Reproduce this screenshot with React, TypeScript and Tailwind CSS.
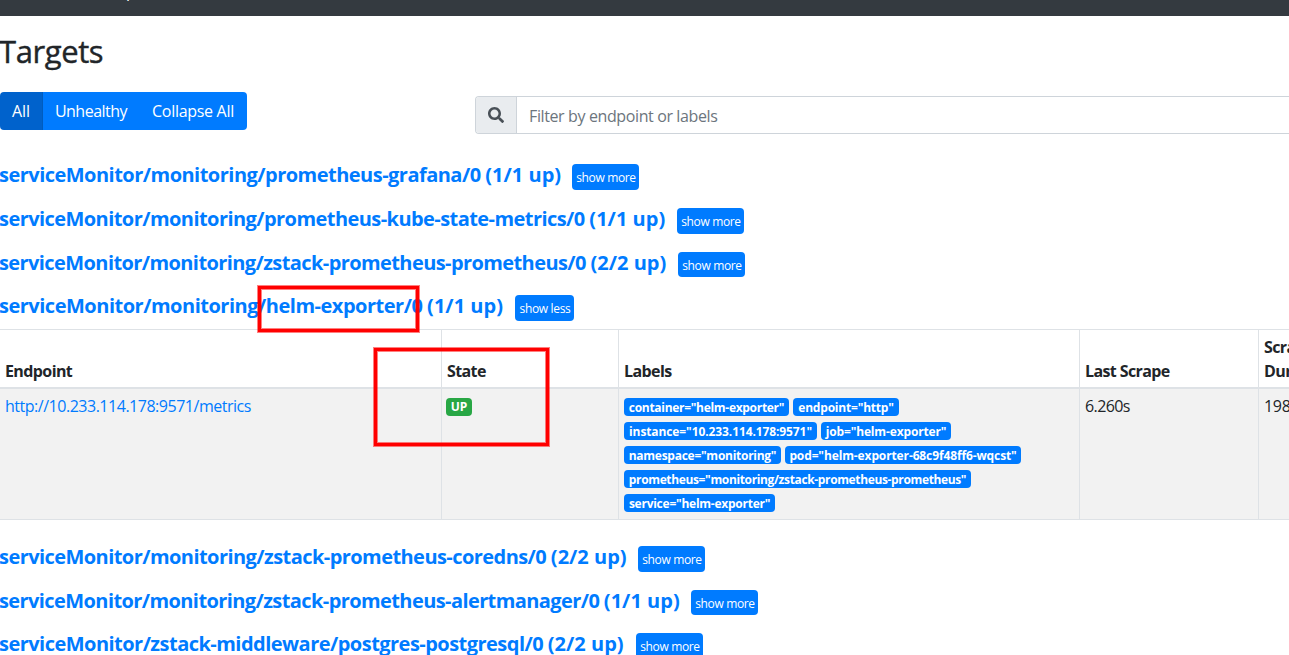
import { FaSearch } from "react-icons/fa";

type Pool = { name: string; count: string; box: string; open?: boolean };

const before: Pool[] = [
  { name: "serviceMonitor/monitoring/prometheus-grafana/0", count: "(1/1 up)", box: "w-[573px] tracking-[-0.52px]" },
  { name: "serviceMonitor/monitoring/prometheus-kube-state-metrics/0", count: "(1/1 up)", box: "w-[678px] tracking-[-0.56px]" },
  { name: "serviceMonitor/monitoring/zstack-prometheus-prometheus/0", count: "(2/2 up)", box: "w-[679px] tracking-[-0.59px]" },
  { name: "serviceMonitor/monitoring/helm-exporter/0", count: "(1/1 up)", box: "w-[516px] tracking-[-0.49px]", open: true },
];

const after: Pool[] = [
  { name: "serviceMonitor/monitoring/zstack-prometheus-coredns/0", count: "(2/2 up)", box: "w-[639px] tracking-[-0.56px]" },
  { name: "serviceMonitor/monitoring/zstack-prometheus-alertmanager/0", count: "(1/1 up)", box: "w-[692px] tracking-[-0.59px]" },
  { name: "serviceMonitor/zstack-middleware/postgres-postgresql/0", count: "(2/2 up)", box: "w-[637px] tracking-[-0.53px]" },
];

const labels = [
  [{ t: 'container="helm-exporter"', w: "w-[165px] tracking-[-0.3px]" }, { t: 'endpoint="http"', w: "w-[106px] tracking-[-0.2px]" }],
  [{ t: 'instance="10.233.114.178:9571"', w: "w-[193px] tracking-[-0.1px]" }, { t: 'job="helm-exporter"', w: "w-[130px] tracking-[-0.15px]" }],
  [{ t: 'namespace="monitoring"', w: "w-[157px] tracking-[-0.27px]" }, { t: 'pod="helm-exporter-68c9f48ff6-wqcst"', w: "w-[236px] tracking-[-0.12px]" }],
  [{ t: 'prometheus="monitoring/zstack-prometheus-prometheus"', w: "w-[347px] tracking-[-0.36px]" }],
  [{ t: 'service="helm-exporter"', w: "w-[151px] tracking-[-0.25px]" }],
];

function PoolRow({ pool }: { pool: Pool }) {
  return (
    <div className="-ml-px flex h-[43.85px] items-start whitespace-nowrap">
      <h3 className={`${pool.box} -mt-px shrink-0 text-[20px] leading-6 font-bold text-[#007bff]`}>
        {pool.name} <span className="tracking-[0.02px]">{pool.count}</span>
      </h3>
      <button
        className={`${pool.open ? "w-[59px]" : "w-[67px]"} h-[25.85px] shrink-0 rounded bg-[#007bff] pt-[2px] pl-px text-center text-[12px] tracking-[-0.35px] text-white`}
      >
        {pool.open ? "show less" : "show more"}
      </button>
    </div>
  );
}

export default function App() {
  return (
    <div className="relative h-[655px] w-full overflow-hidden bg-white font-['Open_Sans','Noto_Sans',sans-serif] text-[16px] leading-6 text-[#212529]">
      <nav className="h-4 overflow-hidden bg-[#343a40] pl-[99px] text-white">
        <div className="-mt-[21px] leading-6">Graph</div>
      </nav>
      <h2 className="mt-[16px] -ml-px h-[38px] text-[31px] leading-[38px] font-medium tracking-[-0.4px] [-webkit-text-stroke:0.4px_#212529]">Targets</h2>
      <div className="mt-[22px] flex h-[71.85px] items-start">
        <div className="flex h-[38px] w-[247px] overflow-hidden rounded-r text-white">
          <button className="w-[43px] rounded-l border-r border-[#005cbf] bg-[#0062cc]">All</button>
          <button className="w-[96px] bg-[#007bff] tracking-[-0.5px]">Unhealthy</button>
          <button className="w-[108px] bg-[#007bff] tracking-[-0.3px]">Collapse All</button>
        </div>
        <div className="mt-1 ml-[228px] flex h-[38px] flex-1 overflow-hidden rounded-l border border-r-0 border-[#ced4da]">
          <div className="flex w-[41px] items-center justify-center border-r border-[#ced4da] bg-[#e9ecef] text-[#495057]">
            <FaSearch size={16} />
          </div>
          <div className="flex items-center pt-[2px] pl-3 tracking-[-0.38px] text-[#6c757d]">Filter by endpoint or labels</div>
        </div>
      </div>

      <div className="h-[165.15px]">
        {before.map((p) => <PoolRow key={p.name} pool={p} />)}
      </div>

      <table className="h-[191px] w-[1400px] table-fixed border-separate border-spacing-0 border-t border-[#dee2e6] text-left">
        <colgroup>
          <col className="w-[441px]" /><col className="w-[177px]" /><col className="w-[461px]" /><col className="w-[179px]" /><col className="w-[142px]" />
        </colgroup>
        <thead>
          <tr className="h-[59px] align-bottom tracking-[-0.6px] [&>th]:border-b-2 [&>th]:border-l [&>th]:border-[#dee2e6] [&>th]:pb-1 [&>th]:pl-[5px] [&>th]:font-bold">
            <th className="border-l-0!">Endpoint</th>
            <th>State</th>
            <th>Labels</th>
            <th>Last Scrape</th>
            <th>Scrape<br />Duration</th>
          </tr>
        </thead>
        <tbody>
          <tr className="h-[131px] bg-[#f2f2f2] align-top [&>td]:border-b [&>td]:border-l [&>td]:border-[#dee2e6] [&>td]:pt-[5px] [&>td]:pl-[5px]">
            <td className="border-l-0! tracking-[-0.48px] text-[#007bff]">http://10.233.114.178:9571/metrics</td>
            <td>
              <span className="mt-1 -ml-px flex h-[18px] w-[26px] items-center justify-center rounded bg-[#28a745] pt-px text-[12px] font-bold text-white">UP</span>
            </td>
            <td>
              <div className="mt-1 flex flex-col gap-[6px]">
                {labels.map((row, i) => (
                  <div key={i} className="flex gap-1">
                    {row.map((l) => (
                      <span key={l.t} className={`${l.w} flex h-[18px] items-center justify-center rounded bg-[#007bff] pt-[2px] text-[12px] font-bold whitespace-nowrap text-white`}>{l.t}</span>
                    ))}
                  </div>
                ))}
              </div>
            </td>
            <td className="tracking-[-0.6px]">6.260s</td>
            <td className="tracking-[-0.3px]">198.3ms</td>
          </tr>
        </tbody>
      </table>

      <div className="mt-[25.7px]">
        {after.map((p) => <PoolRow key={p.name} pool={p} />)}
      </div>

      <div className="absolute top-[286px] left-[258px] h-[46px] w-[161px] border-[3px] border-[#f00] shadow-[0_0_0_1px_#ff000080,inset_0_0_0_1px_#ff000080]" />
      <div className="absolute top-[348px] left-[374px] h-[98px] w-[175px] border-[3px] border-[#f00] shadow-[0_0_0_1px_#ff000080,inset_0_0_0_1px_#ff000080]" />
    </div>
  );
}
